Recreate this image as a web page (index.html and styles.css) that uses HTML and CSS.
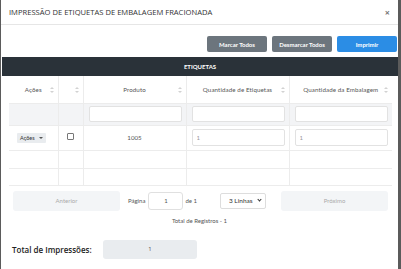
FILE: index.html
```html
<!DOCTYPE html>
<html lang="pt-BR">

<head>
  <meta charset="UTF-8" />
  <meta name="viewport" content="width=device-width, initial-scale=1.0" />
  <title>Impressão de Etiquetas</title>
  <link rel="stylesheet" href="styles.css">
</head>

<body>
  <div class="modal">
    <div class="modalHeader">
      <span class="modalTitle">IMPRESSÃO DE ETIQUETAS DE EMBALAGEM FRACIONADA</span>
      <span class="closeBtn">×</span>
    </div>

    <div class="toolbar">
      <button class="btn btnGray">Marcar Todos</button>
      <button class="btn btnGray">Desmarcar Todos</button>
      <button class="btn btnBlue">Imprimir</button>
    </div>

    <div class="sectionBar">ETIQUETAS</div>

    <div class="tableWrap">
      <table class="grid">
        <colgroup>
          <col class="colAcoes">
          <col class="colCheck">
          <col class="colWide">
          <col class="colWide">
          <col class="colWide">
        </colgroup>
        <thead>
          <tr class="headRow">
            <th><span>Ações</span><i class="sort"></i></th>
            <th><span></span><i class="sort"></i></th>
            <th><span>Produto</span><i class="sort"></i></th>
            <th><span>Quantidade de Etiquetas</span><i class="sort"></i></th>
            <th><span>Quantidade da Embalagem</span><i class="sort"></i></th>
          </tr>
          <tr class="filterRow">
            <td></td>
            <td></td>
            <td><input class="cellInput" type="text"></td>
            <td><input class="cellInput" type="text"></td>
            <td><input class="cellInput" type="text"></td>
          </tr>
        </thead>
        <tbody>
          <tr class="dataRow">
            <td><span class="actionBtn">Ações <b class="caret"></b></span></td>
            <td><span class="checkBox"></span></td>
            <td class="center">1005</td>
            <td><input class="cellInput" type="text" value="1"></td>
            <td><input class="cellInput" type="text" value="1"></td>
          </tr>
          <tr class="emptyRow"><td></td><td></td><td></td><td></td><td></td></tr>
          <tr class="emptyRow last"><td></td><td></td><td></td><td></td><td></td></tr>
        </tbody>
      </table>
    </div>

    <div class="pager">
      <button class="pageBtn">Anterior</button>
      <div class="pageInfo">
        <span>Página</span>
        <input class="pageInput" type="text" value="1">
        <span>de 1</span>
        <span class="rowsSelect">3 Linhas <b class="chev"></b></span>
      </div>
      <button class="pageBtn">Próximo</button>
    </div>
    <div class="totalRecords">Total de Registros - 1</div>

    <div class="totalPrints">
      <label>Total de Impressões:</label>
      <div class="totalBox">1</div>
    </div>
  </div>
</body>

</html>
```

FILE: styles.css
```css
* {
  padding: 0;
  margin: 0;
  box-sizing: border-box;
}

body {
  height: 269px;
  width: 100%;
  overflow: hidden;
  background: #5b5b5b;
  font-family: Lato, "Open Sans", sans-serif;
  color: #444;
}

.modal {
  width: 397px;
  height: 269px;
  margin-left: 1px;
  background: #ffffff;
  display: flex;
  flex-direction: column;
}

.modalHeader {
  height: 25px;
  flex-shrink: 0;
  padding: 0 8px;
  display: flex;
  align-items: center;
  justify-content: space-between;
  border-bottom: 1px solid #e6e6e6;
  font-family: "Open Sans", sans-serif;
}

.modalTitle {
  font-size: 7.6px;
  color: #333;
}

.closeBtn {
  font-size: 9px;
  color: #777;
  font-weight: bold;
}

.toolbar {
  display: flex;
  justify-content: flex-end;
  gap: 5px;
  padding: 11px 1px 0 0;
  height: 32px;
  flex-shrink: 0;
}

.btn {
  width: 60px;
  height: 16px;
  border: none;
  border-radius: 2px;
  color: #fff;
  font-family: Lato, sans-serif;
  font-weight: bold;
  font-size: 6px;
}

.btnGray {
  background: #6c757d;
}

.btnBlue {
  background: #2b8de5;
}

.sectionBar {
  height: 19px;
  flex-shrink: 0;
  margin-left: 1px;
  background: #2a3239;
  color: #fff;
  font-size: 6px;
  font-weight: bold;
  display: flex;
  align-items: center;
  justify-content: center;
}

.tableWrap {
  padding: 0 6px 0 8px;
}

.grid {
  width: 383px;
  border-collapse: collapse;
  table-layout: fixed;
  font-size: 6.2px;
  color: #555;
}

.colAcoes {
  width: 49px;
}

.colCheck {
  width: 25px;
}

.colWide {
  width: 103px;
}

.grid th,
.grid td {
  border-left: 1px solid #ececec;
  border-bottom: 1px solid #ececec;
  padding: 0 5px;
  vertical-align: middle;
}

.grid th:first-child,
.grid td:first-child {
  border-left: none;
}

.headRow th {
  height: 27px;
  font-weight: normal;
  position: relative;
}

.headRow th span {
  display: block;
  text-align: center;
  letter-spacing: 0.1px;
}

.sort {
  position: absolute;
  right: 4px;
  top: 11px;
  width: 4px;
  height: 6px;
}

.sort::before,
.sort::after {
  content: "";
  position: absolute;
  left: 0;
  border-left: 2px solid transparent;
  border-right: 2px solid transparent;
}

.sort::before {
  top: 0;
  border-bottom: 2px solid #d2d2d2;
}

.sort::after {
  bottom: 0;
  border-top: 2px solid #d2d2d2;
}

.filterRow td {
  height: 22px;
  background: #f3f4f6;
}

.cellInput {
  display: block;
  width: 93px;
  height: 16px;
  border: 1px solid #e2e2e2;
  border-radius: 2px;
  background: #fff;
  padding: 0 4px;
  font-family: Lato, sans-serif;
  font-size: 6px;
  color: #999;
  outline: none;
}

.dataRow td {
  height: 25px;
}

.dataRow .cellInput {
  height: 17px;
}

.center {
  text-align: center;
}

.actionBtn {
  display: inline-flex;
  align-items: center;
  gap: 4px;
  height: 10px;
  padding: 0 3px;
  margin-left: 3px;
  background: #e9ecef;
  border-radius: 1px;
  font-size: 5.5px;
  color: #333;
}

.caret {
  width: 0;
  height: 0;
  border-left: 2px solid transparent;
  border-right: 2px solid transparent;
  border-top: 2px solid #555;
}

.checkBox {
  display: block;
  width: 7px;
  height: 7px;
  margin: 0 0 3px 3px;
  border: 1px solid #777;
  border-radius: 1px;
}

.emptyRow td {
  height: 18px;
}

.emptyRow.last td {
  height: 17px;
}

.pager {
  display: flex;
  align-items: center;
  padding: 5px 10px 0 12px;
}

.pageBtn {
  width: 107px;
  height: 20px;
  border: none;
  border-radius: 3px;
  background: #f3f5f7;
  color: #aaa;
  font-family: Lato, sans-serif;
  font-size: 6px;
}

.pageInfo {
  flex: 1;
  display: flex;
  align-items: center;
  padding-left: 8px;
  font-size: 6px;
  color: #555;
}

.pageInput {
  width: 35px;
  height: 18px;
  margin: 0 2px 0 3px;
  border: 1px solid #e0e0e0;
  border-radius: 3px;
  text-align: center;
  font-family: Lato, sans-serif;
  font-size: 6px;
  color: #555;
  outline: none;
}

.rowsSelect {
  display: flex;
  align-items: center;
  justify-content: space-between;
  width: 46px;
  height: 16px;
  margin-left: 23px;
  padding: 0 4px 0 8px;
  border: 1px solid #ddd;
  border-radius: 2px;
  font-size: 6.5px;
  color: #333;
}

.chev {
  width: 3px;
  height: 3px;
  border-right: 1px solid #333;
  border-bottom: 1px solid #333;
  transform: rotate(45deg);
  margin-bottom: 2px;
}

.totalRecords {
  text-align: center;
  font-size: 6px;
  color: #555;
  margin-top: 6px;
}

.totalPrints {
  display: flex;
  align-items: center;
  padding: 16px 0 0 11px;
  font-family: "Open Sans", sans-serif;
}

.totalPrints label {
  font-size: 8px;
  font-weight: 600;
  color: #222;
  width: 91px;
}

.totalBox {
  width: 94px;
  height: 19px;
  background: #e9ecef;
  border-radius: 3px;
  display: flex;
  align-items: center;
  justify-content: center;
  font-size: 6px;
  color: #555;
}
```
